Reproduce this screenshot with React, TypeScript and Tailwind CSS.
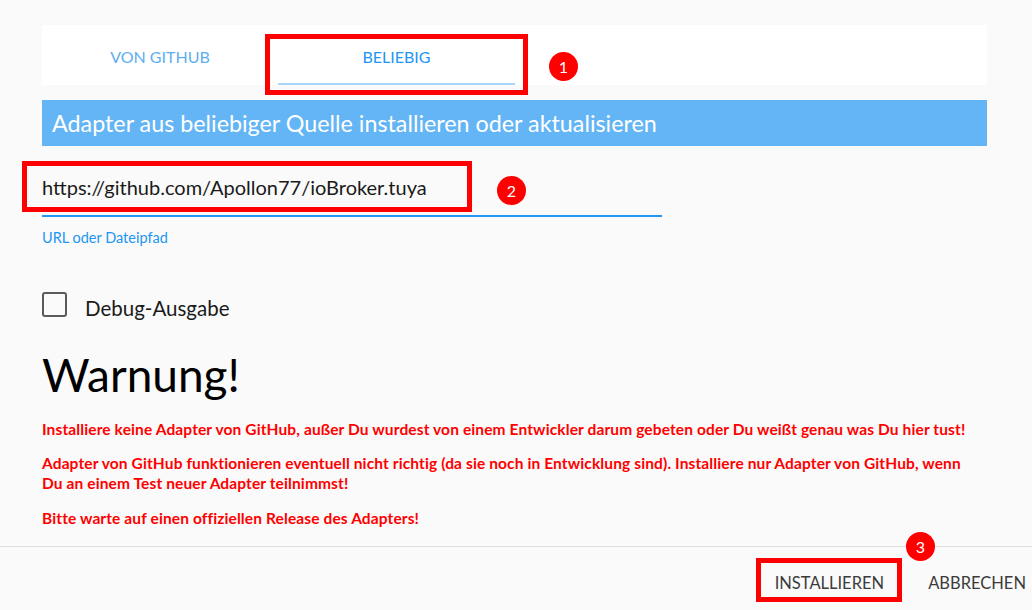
export default function App() {
  return (
    <div className="relative flex h-[610px] w-[1032px] flex-col overflow-hidden bg-[#fafafa] font-['Lato','Liberation_Sans',sans-serif] text-[#212121]">
      <div className="flex-1 pl-[42px] pr-[45px] pt-[25px]">
        {/* Tabs */}
        <div className="flex h-[60px] bg-white">
          <div className="flex w-[236px] items-center justify-center pt-[4px] text-[16px] text-[#5eaeef]">VON GITHUB</div>
          <div className="relative flex w-[237px] items-center justify-center pt-[4px] text-[16px] text-[#2196f3]">
            BELIEBIG
            <div className="absolute bottom-0 left-0 right-0 h-[2px] bg-[#a9d5f8]" />
          </div>
        </div>

        {/* Header */}
        <div className="mt-[15px] flex h-[46px] items-center bg-[#64b5f6] pl-[10px] text-[23.3px] text-white">
          Adapter aus beliebiger Quelle installieren oder aktualisieren
        </div>

        {/* URL input */}
        <div className="mt-[29px] w-[620px] border-b-2 border-[#2196f3] pb-[16px]">
          <div className="h-[24px] text-[20px] leading-[24px] text-[#1a1a1a]">https://github.com/Apollon77/ioBroker.tuya</div>
        </div>
        <div className="mt-[11px] h-[20px] text-[14.5px] leading-[20px] text-[#2196f3]">URL oder Dateipfad</div>

        {/* Checkbox */}
        <div className="mt-[44px] flex h-[25px] items-center">
          <div className="h-[25px] w-[25px] rounded-[3px] border-[2.5px] border-[#5a5a5a]" />
          <span className="ml-[18px] pt-[8px] text-[20.5px] text-[#1a1a1a]">Debug-Ausgabe</span>
        </div>

        {/* Warning */}
        <div className="mt-[30px] text-[46px] leading-[56px] text-black">Warnung!</div>
        <div className="mt-[16px] text-[15.5px] font-bold leading-[20px] tracking-[0.12px] text-[#ff0000]">
          <p>Installiere keine Adapter von GitHub, außer Du wurdest von einem Entwickler darum gebeten oder Du weißt genau was Du hier tust!</p>
          <p className="mt-[14px]">
            Adapter von GitHub funktionieren eventuell nicht richtig (da sie noch in Entwicklung sind). Installiere nur Adapter von GitHub, wenn
            <br />
            Du an einem Test neuer Adapter teilnimmst!
          </p>
          <p className="mt-[15px]">Bitte warte auf einen offiziellen Release des Adapters!</p>
        </div>
      </div>

      {/* Footer */}
      <div className="flex h-[64px] items-center justify-end gap-[44px] border-t border-[#e0e0e0] pr-[6px] pt-[10px] text-[16.5px] text-[#3c3c3c]">
        <span>INSTALLIEREN</span>
        <span>ABBRECHEN</span>
      </div>

      {/* Annotations */}
      <div className="absolute left-[265px] top-[34px] h-[61px] w-[263px] border-[5px] border-[#ff0000]" />
      <div className="absolute left-[22px] top-[161px] h-[51px] w-[450px] border-[5px] border-[#ff0000]" />
      <div className="absolute left-[756px] top-[558px] h-[44px] w-[146px] border-[5px] border-[#ff0000]" />

      <div className="absolute left-[549px] top-[52px] flex h-[29px] w-[29px] items-center justify-center rounded-full bg-[#ff0000] text-[16px] text-white">1</div>
      <div className="absolute left-[497px] top-[176px] flex h-[29px] w-[29px] items-center justify-center rounded-full bg-[#ff0000] text-[16px] text-white">2</div>
      <div className="absolute left-[906px] top-[532px] flex h-[29px] w-[29px] items-center justify-center rounded-full bg-[#ff0000] text-[16px] text-white">3</div>
    </div>
  );
}
